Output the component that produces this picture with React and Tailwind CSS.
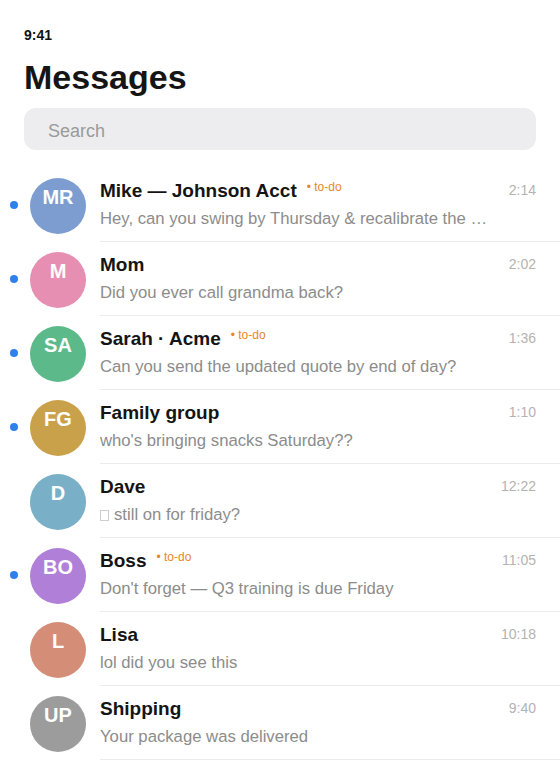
import React from "react";

const chats = [
  { initials: "MR", color: "bg-[#7d9dd0]", name: "Mike — Johnson Acct", todo: true, unread: true, time: "2:14", preview: "Hey, can you swing by Thursday & recalibrate the …" },
  { initials: "M", color: "bg-[#e68fb3]", name: "Mom", unread: true, time: "2:02", preview: "Did you ever call grandma back?" },
  { initials: "SA", color: "bg-[#5cba8a]", name: "Sarah · Acme", todo: true, unread: true, time: "1:36", preview: "Can you send the updated quote by end of day?" },
  { initials: "FG", color: "bg-[#c9a14b]", name: "Family group", unread: true, time: "1:10", preview: "who's bringing snacks Saturday??" },
  { initials: "D", color: "bg-[#79b0c7]", name: "Dave", time: "12:22", preview: "still on for friday?", tofu: true },
  { initials: "BO", color: "bg-[#b07fd7]", name: "Boss", todo: true, unread: true, time: "11:05", preview: "Don't forget — Q3 training is due Friday" },
  { initials: "L", color: "bg-[#d48d77]", name: "Lisa", time: "10:18", preview: "lol did you see this" },
  { initials: "UP", color: "bg-[#9c9c9c]", name: "Shipping", time: "9:40", preview: "Your package was delivered" },
];

const ChatRow = ({ chat }) => (
  <div className="flex items-start h-[74px] pl-[10px]">
    <div className="w-2 shrink-0 pt-[33px]">
      {chat.unread && <div className="h-2 w-2 rounded-full bg-[#2f80ed]" />}
    </div>
    <div
      className={`ml-3 mt-[10px] h-14 w-14 shrink-0 rounded-full ${chat.color} flex justify-center pt-[7px] text-[20px] leading-6 font-bold text-white`}
    >
      {chat.initials}
    </div>
    <div className="ml-[14px] flex-1 min-w-0 h-[74px] border-b border-[#ececec] pt-[11px] pr-6">
      <div className="flex items-start">
        <span className="text-[19px] leading-6 font-bold text-[#141414]">{chat.name}</span>
        {chat.todo && (
          <span className="ml-[10px] text-[12px] leading-4 text-[#e8862a]">• to-do</span>
        )}
        <span className="ml-auto mt-[1px] text-[14px] leading-5 text-[#b3b3b3]">{chat.time}</span>
      </div>
      <div className="mt-[5px] pr-10 truncate text-[16.7px] leading-[22px] text-[#8c8c8c]">
        {chat.tofu && (
          <span className="inline-block align-[-1px] mr-[5px] h-[11px] w-[9px] border border-[#cfcfcf]" />
        )}
        {chat.preview}
      </div>
    </div>
  </div>
);

export default function App() {
  return (
    <div className="min-h-screen bg-white font-['Liberation_Sans',Arial,sans-serif]">
      <div className="px-6 pt-[25px]">
        <div className="text-[14px] leading-5 font-bold text-[#111]">9:41</div>
        <h1 className="mt-3 text-[34px] leading-10 font-bold text-[#151515]">Messages</h1>
        <div className="mt-[11px] h-[42px] rounded-xl bg-[#ededef] px-6 pt-1 flex items-center">
          <span className="text-[18px] text-[#9a9a9a]">Search</span>
        </div>
      </div>
      <div className="mt-[18px]">
        {chats.map((chat) => (
          <ChatRow key={chat.name} chat={chat} />
        ))}
      </div>
    </div>
  );
}
